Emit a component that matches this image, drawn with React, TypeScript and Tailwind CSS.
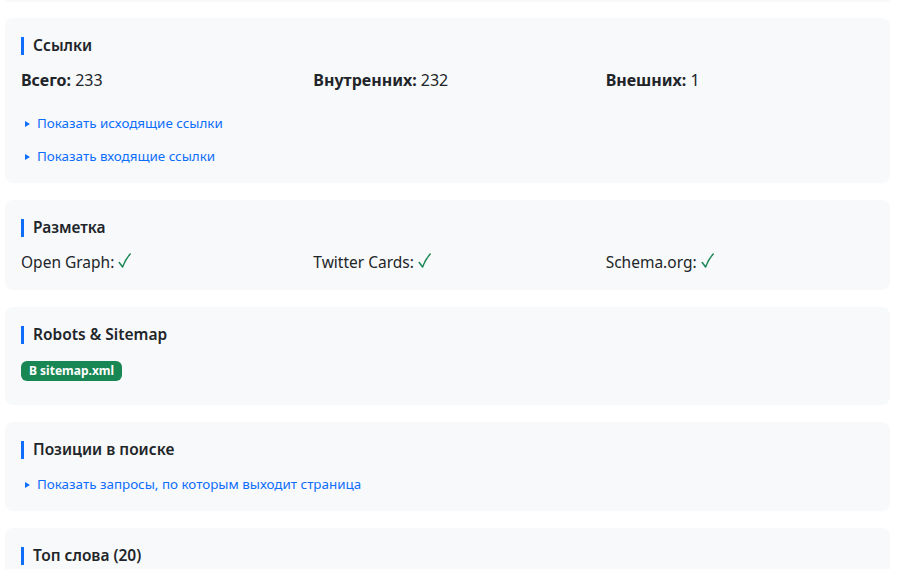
import React from 'react';

const font = { fontFamily: '"Noto Sans", "Open Sans", sans-serif' };

const SectionTitle: React.FC<{ children: React.ReactNode }> = ({ children }) => (
  <h3 className="flex items-center h-[23px] mb-3 text-[15.5px] font-semibold text-[#212529]">
    <span className="w-[3px] h-[18px] bg-[#0d6efd] mr-[9px]" />
    {children}
  </h3>
);

const Card: React.FC<{ children: React.ReactNode }> = ({ children }) => (
  <section className="bg-[#f8f9fa] rounded-lg px-4 pt-4 pb-4 mb-[17px]">{children}</section>
);

// collapsed disclosure with a small blue marker
const Toggle: React.FC<{ label: string; className?: string }> = ({ label, className }) => (
  <details className={className}>
    <summary className="list-none [&::-webkit-details-marker]:hidden flex items-center cursor-pointer text-[13.4px] leading-[21px] text-[#0d6efd]">
      <svg width="5" height="6" viewBox="0 0 5 6" className="ml-1 mr-[7px]">
        <path d="M0 0 L5 3 L0 6 Z" fill="#0d6efd" />
      </svg>
      {label}
    </summary>
  </details>
);

const Check = () => (
  <svg width="13" height="16" viewBox="0 0 13 16" className="ml-1 -mt-[2px]">
    <path d="M1.2 9.5 L4.6 14 C6.5 9 9 4.5 12.2 1" fill="none" stroke="#198754" strokeWidth="1.5" strokeLinecap="round" strokeLinejoin="round" />
  </svg>
);

export default function App() {
  return (
    <div className="bg-white min-h-screen pl-[5px] pr-[10px] text-[#212529]" style={font}>
      <div className="h-[2px] bg-[#f8f9fa] rounded-b-lg mb-4" />

      <Card>
        <SectionTitle>Ссылки</SectionTitle>
        <div className="grid grid-cols-3 gap-6 text-[16px] leading-6 h-6 -mt-px">
          <div><b className="font-bold">Всего:</b> 233</div>
          <div><b className="font-bold">Внутренних:</b> 232</div>
          <div><b className="font-bold">Внешних:</b> 1</div>
        </div>
        <Toggle className="mt-[21px]" label="Показать исходящие ссылки" />
        <Toggle className="mt-3" label="Показать входящие ссылки" />
      </Card>

      <Card>
        <SectionTitle>Разметка</SectionTitle>
        <div className="grid grid-cols-3 gap-6 text-[15.5px] leading-6 h-6 -mt-px">
          <div className="flex items-center">Open Graph:<Check /></div>
          <div className="flex items-center">Twitter Cards:<Check /></div>
          <div className="flex items-center">Schema.org:<Check /></div>
        </div>
      </Card>

      <Card>
        <SectionTitle>Robots &amp; Sitemap</SectionTitle>
        <div className="h-[24px] mb-[7px] pt-px flex items-center">
          <span className="inline-flex items-center h-5 px-2 rounded-md bg-[#198754] text-white text-[12px] font-bold">
            В sitemap.xml
          </span>
        </div>
      </Card>

      <Card>
        <SectionTitle>Позиции в поиске</SectionTitle>
        <Toggle className="pt-px" label="Показать запросы, по которым выходит страница" />
      </Card>

      <Card>
        <SectionTitle>Топ слова (20)</SectionTitle>
        <div className="h-16" />
      </Card>
    </div>
  );
}
